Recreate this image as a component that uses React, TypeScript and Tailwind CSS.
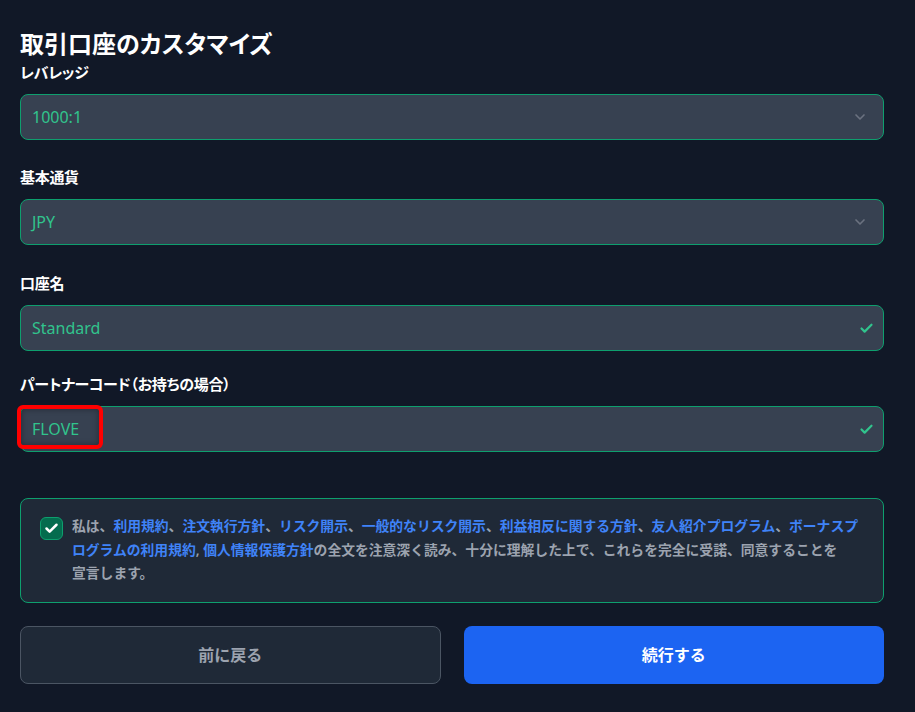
import { Check, ChevronDown } from "lucide-react"

const font = "[font-family:'Noto_Sans','Noto_Sans_CJK_JP',sans-serif]"
const palt = "[font-feature-settings:'palt']"

function Field({
  label,
  value,
  icon,
  labelClass = "mt-7",
  highlight = false,
}: {
  label: string
  value: string
  icon: "chevron" | "check"
  labelClass?: string
  highlight?: boolean
}) {
  return (
    <div>
      <div className={`${labelClass} ${palt} mb-3 text-[15px] font-bold leading-5 tracking-[-0.3px] text-white`}>{label}</div>
      <div className="relative flex h-[46px] items-center justify-between rounded-lg border border-[#0e9f6e] bg-[#374151] pl-[11px] pr-[15px]">
        <span className="text-[16px] text-[#31c48d]">{value}</span>
        {icon === "chevron" ? (
          <ChevronDown size={16} strokeWidth={2.5} className="text-[#6b7280]" />
        ) : (
          <Check size={15} strokeWidth={3.5} className="mr-[-6px] text-[#31c48d]" />
        )}
        {highlight && (
          <div className="pointer-events-none absolute left-[-4px] top-[-2px] h-[44px] w-[86px] rounded-md border-4 border-[#ff0000] shadow-[inset_0_0_6px_rgba(0,0,0,0.35)]" />
        )}
      </div>
    </div>
  )
}

function Link({ children }: { children: string }) {
  return <span className="text-[#3f83f8]">{children}</span>
}

export default function App() {
  return (
    <div className={`${font} min-h-[712px] w-full bg-[#111827]`}>
      <div className="ml-5 w-[864px] pt-7">
        <h1 className={`${palt} text-[24px] font-bold leading-8 text-white`}>取引口座のカスタマイズ</h1>
        <Field label="レバレッジ" value="1000:1" icon="chevron" labelClass="mt-[2px]" />
        <Field label="基本通貨" value="JPY" icon="chevron" labelClass="mt-[27px]" />
        <Field label="口座名" value="Standard" icon="check" labelClass="mt-[28px]" />
        <Field label="パートナーコード（お持ちの場合）" value="FLOVE" icon="check" labelClass="mt-[23px]" highlight />

        <div className="mt-[46px] flex gap-[9px] rounded-lg border border-[#0e9f6e] bg-[#1f2937] pb-[17px] pl-[19px] pr-4 pt-[15px]">
          <div className="mt-[3px] flex h-[23px] w-[23px] shrink-0 items-center justify-center rounded-md border border-[#0e9f6e] bg-[#046c4e]">
            <Check size={15} strokeWidth={4} className="text-white" />
          </div>
          <p className="text-[13.8px] font-semibold leading-[23.5px] text-[#9ca3af]">
            私は、<Link>利用規約</Link>、<Link>注文執行方針</Link>、<Link>リスク開示</Link>、<Link>一般的なリスク開示</Link>、
            <Link>利益相反に関する方針</Link>、<Link>友人紹介プログラム</Link>、<Link>ボーナスプログラムの利用規約</Link>,{" "}
            <Link>個人情報保護方針</Link>の全文を注意深く読み、十分に理解した上で、これらを完全に受諾、同意することを
            <span className="whitespace-nowrap">宣言します。</span>
          </p>
        </div>

        <div className="mt-[23px] grid grid-cols-2 gap-[23px]">
          <button className="h-[58px] rounded-lg border border-[#4b5563] bg-[#1f2937] text-[16px] font-bold text-[#9ca3af]">
            前に戻る
          </button>
          <button className="h-[58px] rounded-lg bg-[#1c64f2] text-[16px] font-bold text-white">続行する</button>
        </div>
      </div>
    </div>
  )
}
